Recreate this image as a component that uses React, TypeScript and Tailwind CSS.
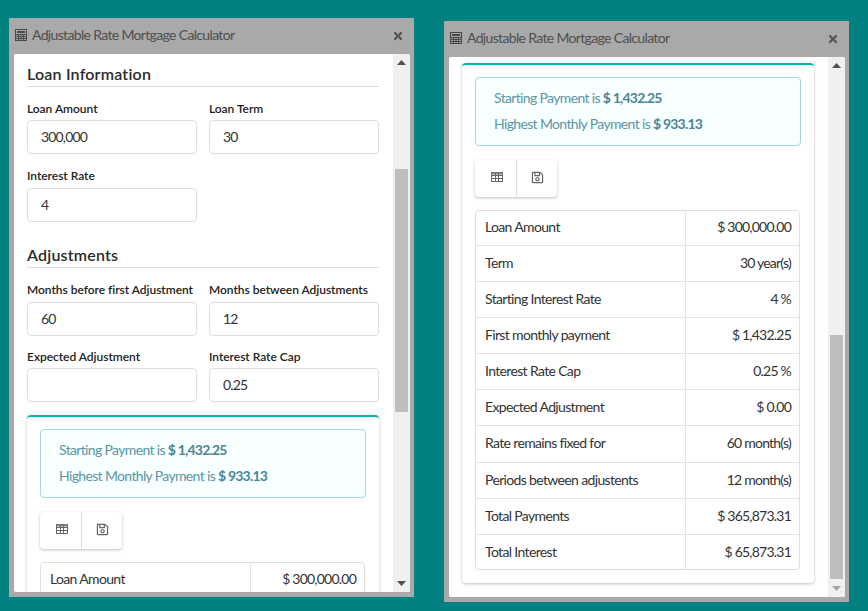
import { FaRegSave, FaTimes } from "react-icons/fa";

const summaryRows = [
  { name: "Loan Amount", amount: "$ 300,000.00", row: "h-[34px] leading-[32px]" },
  { name: "Term", amount: "30 year(s)", row: "h-[36px] leading-[34px]" },
  { name: "Starting Interest Rate", amount: "4 %", row: "h-[36px] leading-[34px]" },
  { name: "First monthly payment", amount: "$ 1,432.25", row: "h-[36px] leading-[34px]" },
  { name: "Interest Rate Cap", amount: "0.25 %", row: "h-[36px] leading-[34px]" },
  { name: "Expected Adjustment", amount: "$ 0.00", row: "h-[36px] leading-[34px]" },
  { name: "Rate remains fixed for", amount: "60 month(s)", row: "h-[37px] leading-[34px]" },
  { name: "Periods between adjustents", amount: "12 month(s)", row: "h-[36px] leading-[34px]" },
  { name: "Total Payments", amount: "$ 365,873.31", row: "h-[36px] leading-[34px]" },
  { name: "Total Interest", amount: "$ 65,873.31", row: "h-[35px] leading-[34px]" },
];

function CalculatorIcon() {
  return (
    <svg width="12" height="12" viewBox="0 0 12 12" fill="none" stroke="#4a4a4a" className="shrink-0">
      <rect x="0.5" y="0.5" width="11" height="11" />
      <rect x="2" y="2" width="8" height="2" fill="#4a4a4a" stroke="none" />
      <path d="M1 5.5h10M1 7.5h10M1 9.5h10M3.5 5v6M6 5v6M8.5 5v6" strokeWidth="1" />
    </svg>
  );
}

function TableIcon() {
  return (
    <svg width="12" height="10" viewBox="0 0 12 10" fill="none" stroke="#666">
      <rect x="0.5" y="0.5" width="11" height="9" />
      <rect x="0.5" y="0.5" width="11" height="2" fill="#888" stroke="none" />
      <path d="M0.5 3.5h11M0.5 6.5h11M4.5 1v8M7.5 1v8" />
    </svg>
  );
}

function Field({ label, value, roomy }: { label: string; value?: string; roomy?: boolean }) {
  return (
    <div className="w-[170px]">
      <div className={`whitespace-nowrap text-[12px] leading-[15px] font-semibold tracking-[-0.03px] text-[#212121] ${roomy ? "mb-[5px]" : "mb-[4px]"}`}>
        {label}
      </div>
      <div className="h-[34px] rounded-[4px] border border-[#dedede] bg-white pl-[13px] text-[14px] leading-[32px] tracking-[-0.85px] text-[#333]">
        {value}
      </div>
    </div>
  );
}

function SectionTitle({ children }: { children: string }) {
  return (
    <div className="border-b border-[#dcdcdc] pb-[2px] text-[16px] leading-[20px] font-semibold tracking-[0.2px] text-[#2b2b2b]">{children}</div>
  );
}

function ResultCard() {
  return (
    <div className="w-[352px] rounded-[4px] border-t-[2px] border-t-[#00b5ad] bg-white px-[13px] pt-[12px] pb-[13px] shadow-[0_1px_3px_rgba(34,36,38,0.3)]">
      <div className="h-[69px] w-[326px] rounded-[4px] border border-[#a9d5de] bg-[#f8ffff] pt-[10px] pl-[18px] text-[14px] leading-[20px] tracking-[-0.65px] text-[#5b95a6]">
        <p className="mb-[6px]">
          Starting Payment is <b className="font-bold tracking-[-0.8px] text-[#4a8598]">$ 1,432.25</b>
        </p>
        <p>
          Highest Monthly Payment is <b className="font-bold tracking-[-0.8px] text-[#4a8598]">$ 933.13</b>
        </p>
      </div>
      <div className="mt-[14px] flex h-[37px] w-[82px] rounded-[4px] bg-white shadow-[0_1px_3px_rgba(34,36,38,0.3)]">
        <div className="flex w-[42px] items-center justify-center border-r border-[#dedede] pb-[3px] pl-[2px]">
          <TableIcon />
        </div>
        <div className="flex flex-1 items-center justify-center pb-[3px] text-[#666]">
          <FaRegSave size={13} />
        </div>
      </div>
      <div className="mt-[13px] w-[325px] overflow-hidden rounded-[4px] border border-[#dedede]">
        {summaryRows.map(({ name, amount, row }, i) => (
          <div key={name} className={`flex text-[14px] text-[#333] ${i > 0 ? "border-t border-[#e4e4e4]" : ""} ${row}`}>
            <div className="w-[210px] border-r border-[#e4e4e4] pl-[9px] tracking-[-0.65px]">{name}</div>
            <div className="flex-1 pr-[8px] text-right tracking-[-0.78px]">{amount}</div>
          </div>
        ))}
      </div>
    </div>
  );
}

function ScrollBar({ before, thumb, atEnd }: { before: number; thumb: number; atEnd?: boolean }) {
  return (
    <div className="flex w-[17px] shrink-0 flex-col bg-[#f0f0f0]">
      <div className="flex h-[17px] shrink-0 items-center justify-center">
        <svg width="9" height="5" viewBox="0 0 9 5"><path d="M4.5 0L9 5H0z" fill="#505050" /></svg>
      </div>
      <div className="flex-1">
        <div style={{ height: before }} />
        <div className="mx-[2px] bg-[#bebebe]" style={{ height: thumb }} />
      </div>
      <div className="flex h-[17px] shrink-0 items-center justify-center">
        <svg width="9" height="5" viewBox="0 0 9 5"><path d="M0 0H9L4.5 5z" fill={atEnd ? "#a3a3a3" : "#505050"} /></svg>
      </div>
    </div>
  );
}

function CalcWindow({
  children,
  before,
  thumb,
  atEnd,
  bodyClass,
  className,
}: {
  children: React.ReactNode;
  before: number;
  thumb: number;
  atEnd?: boolean;
  bodyClass: string;
  className?: string;
}) {
  return (
    <div className={`w-[405px] bg-[#a9a9a9] px-[5px] pb-[5px] ${className ?? ""}`}>
      <div className="flex h-[36px] items-center gap-[5px] pr-[5px] pb-[2px] pl-[1px] text-[14px] leading-[18px] tracking-[-0.66px] text-[#4f4f4f]">
        <CalculatorIcon />
        <span>Adjustable Rate Mortgage Calculator</span>
        <FaTimes size={12} className="ml-auto translate-y-[1px] text-[#555]" />
      </div>
      <div className={`-mr-[1px] flex overflow-hidden rounded-[2px] bg-white ${bodyClass}`}>
        <div className="min-w-0 flex-1 overflow-hidden pl-[13px]">{children}</div>
        <ScrollBar before={before} thumb={thumb} atEnd={atEnd} />
      </div>
    </div>
  );
}

export default function App() {
  return (
    <div className="flex h-[611px] w-[868px] items-start gap-[30px] overflow-hidden bg-[#008080] pt-[18px] pl-[9px] font-['Lato','Liberation_Sans',sans-serif]">
      <CalcWindow before={98} thumb={243} bodyClass="h-[538px]">
        <div className="w-[352px] pt-[10px]">
          <SectionTitle>Loan Information</SectionTitle>
          <div className="mt-[14px] flex gap-[12px]">
            <Field label="Loan Amount" value="300,000" />
            <Field label="Loan Term" value="30" />
          </div>
          <div className="mt-[14px]">
            <Field label="Interest Rate" value="4" roomy />
          </div>
          <div className="mt-[23px]">
            <SectionTitle>Adjustments</SectionTitle>
          </div>
          <div className="mt-[14px] flex gap-[12px]">
            <Field label="Months before first Adjustment" value="60" roomy />
            <Field label="Months between Adjustments" value="12" roomy />
          </div>
          <div className="mt-[13px] flex gap-[12px]">
            <Field label="Expected Adjustment" />
            <Field label="Interest Rate Cap" value="0.25" />
          </div>
          <div className="mt-[13px]">
            <ResultCard />
          </div>
        </div>
      </CalcWindow>
      <CalcWindow before={261} thumb={244} atEnd bodyClass="h-[540px]" className="mt-[3px]">
        <div className="pt-[6px]">
          <ResultCard />
        </div>
      </CalcWindow>
    </div>
  );
}
